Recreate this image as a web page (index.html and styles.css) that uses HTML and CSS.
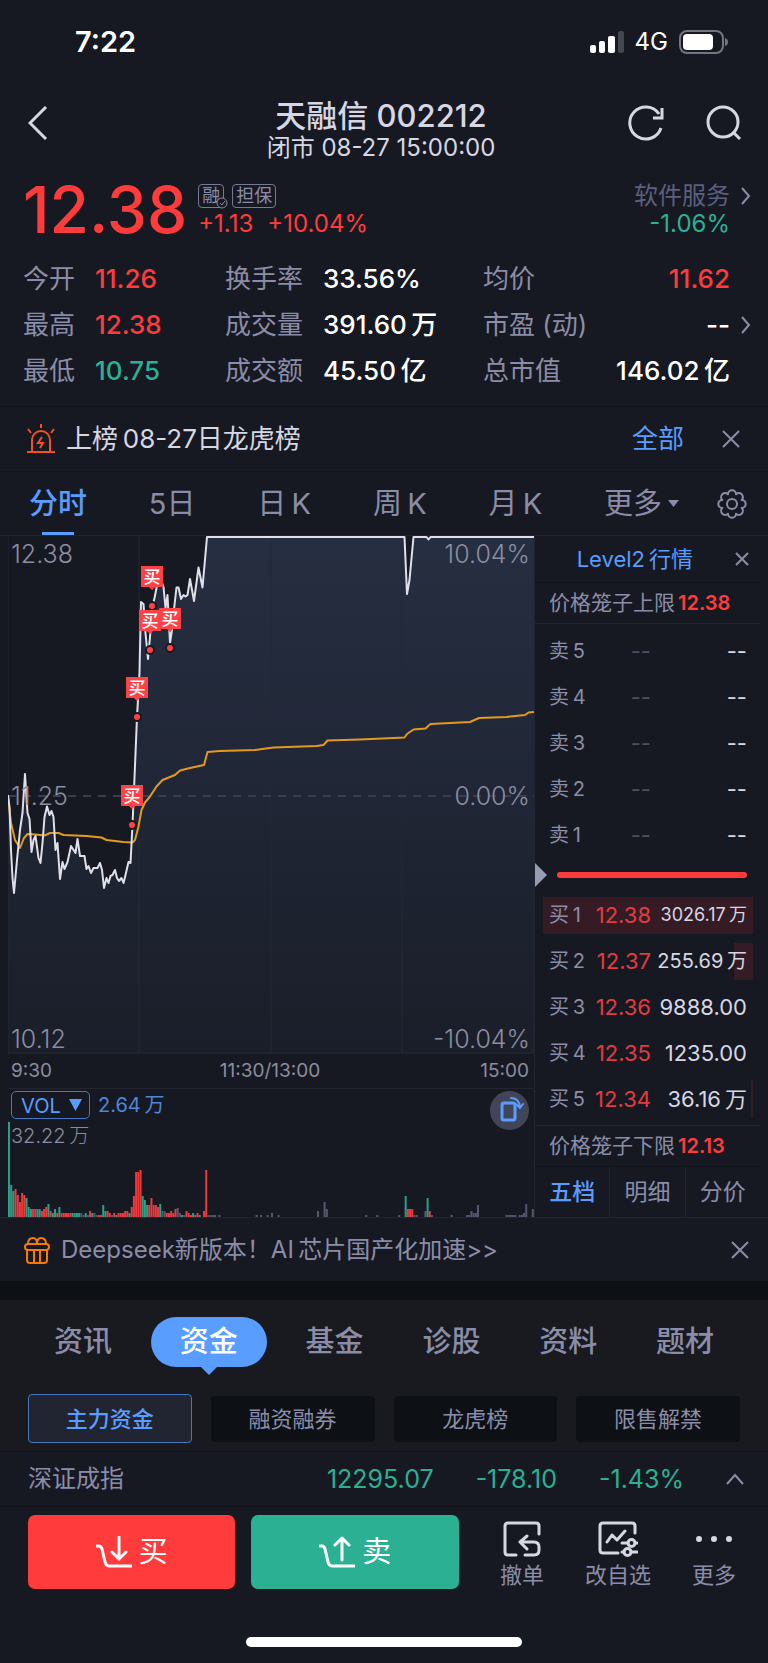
FILE: index.html
```html
<!DOCTYPE html>
<html lang="zh-CN">
<head>
    <meta charset="UTF-8">
    <meta name="viewport" content="width=device-width, initial-scale=1">
    <title>天融信 002212</title>
    <link rel="stylesheet" href="styles.css">
</head>
<body>
    <div class="status-bar">
        <span class="clock">7:22</span>
        <div class="status-icons">
            <svg width="34" height="22" viewBox="0 0 34 22" fill="#fff">
                <rect x="0" y="14" width="6" height="8" rx="2"/>
                <rect x="9" y="10" width="6" height="12" rx="2"/>
                <rect x="18" y="5" width="7" height="17" rx="2"/>
                <rect x="28" y="0" width="6" height="22" rx="2" fill="#45474f"/>
            </svg>
            <span>4G</span>
            <svg width="49" height="24" viewBox="0 0 49 24">
                <rect x="1" y="1" width="43" height="22" rx="7" fill="none" stroke="#74767d" stroke-width="2"/>
                <rect x="4" y="4" width="30" height="16" rx="4" fill="#fff"/>
                <path d="M46 8q3 1 3 4t-3 4z" fill="#74767d"/>
            </svg>
        </div>
    </div>

    <header class="header">
        <button class="icon-btn" aria-label="返回">
            <svg width="20" height="34" viewBox="0 0 20 34"><path d="M18 1L2 17l16 16"/></svg>
        </button>
        <div class="title">
            <h1>天融信 002212</h1>
            <p>闭市 08-27 15:00:00</p>
        </div>
        <div class="header-actions">
            <button class="icon-btn" aria-label="刷新">
                <svg width="36" height="36" viewBox="0 0 36 36"><path d="M33 23A16 16 0 1 1 31 9M34 3v10h-9"/></svg>
            </button>
            <button class="icon-btn" aria-label="搜索">
                <svg width="36" height="36" viewBox="0 0 36 36"><circle cx="17" cy="17" r="15"/><path d="M28 28l6 6"/></svg>
            </button>
        </div>
    </header>

    <section class="quote">
        <div class="quote-top">
            <strong class="price">12.38</strong>
            <div class="change">
                <div class="badges">
                    <span class="badge">融<svg class="badge-check" width="12" height="12" viewBox="0 0 12 12"><circle cx="6" cy="6" r="5"/><path d="M4 6l2 2 3-4"/></svg></span>
                    <span class="badge">担保</span>
                </div>
                <p class="up"><span>+1.13</span><span>+10.04%</span></p>
            </div>
            <a class="sector" href="#">
                <span class="sector-name">软件服务</span>
                <span class="down">-1.06%</span>
                <svg class="more-arrow" width="10" height="18" viewBox="0 0 10 18"><path d="M1 1l7 8-7 8"/></svg>
            </a>
        </div>
        <dl class="stats">
            <div><dt>今开</dt><dd class="up">11.26</dd></div>
            <div><dt>换手率</dt><dd>33.56%</dd></div>
            <div><dt>均价</dt><dd class="up">11.62</dd></div>
            <div><dt>最高</dt><dd class="up">12.38</dd></div>
            <div><dt>成交量</dt><dd>391.60&thinsp;万</dd></div>
            <div><dt>市盈 (动)</dt><dd>--</dd><svg class="more-arrow" width="10" height="18" viewBox="0 0 10 18"><path d="M1 1l7 8-7 8"/></svg></div>
            <div><dt>最低</dt><dd class="down">10.75</dd></div>
            <div><dt>成交额</dt><dd>45.50&thinsp;亿</dd></div>
            <div><dt>总市值</dt><dd>146.02&thinsp;亿</dd></div>
        </dl>
    </section>

    <div class="notice">
        <svg width="28" height="30" viewBox="0 0 28 30" fill="none" stroke="#f4511e" stroke-width="2">
            <path d="M5 27V16a9 9 0 0 1 18 0v11M14 0v4M1 5l3 4M27 5l-3 4M0 28h28"/>
            <path d="M15 13l-4 6h5l-3 5"/>
        </svg>
        <span class="notice-text">上榜&thinsp;08-27日龙虎榜</span>
        <a href="#">全部</a>
        <button class="close" aria-label="关闭"><svg width="18" height="18" viewBox="0 0 18 18"><path d="M1 1l16 16M17 1L1 17"/></svg></button>
    </div>

    <nav class="periods">
        <button class="active">分时</button>
        <button>5日</button>
        <button>日&thinsp;K</button>
        <button>周&thinsp;K</button>
        <button>月&thinsp;K</button>
        <button class="more">更多<svg width="11" height="7" viewBox="0 0 11 7"><path d="M0 0h11L5.500 7z" fill="#8b8da8"/></svg></button>
        <button class="settings" aria-label="设置">
            <svg width="30" height="30" viewBox="0 0 30 30" fill="none" stroke="#8b8da8" stroke-width="2" stroke-linejoin="round">
                <path d="M24.700 11A4 4 0 0 1 24.700 19A4 4 0 0 1 19 24.700A4 4 0 0 1 11 24.700A4 4 0 0 1 5.300 19A4 4 0 0 1 5.300 11A4 4 0 0 1 11 5.300A4 4 0 0 1 19 5.300A4 4 0 0 1 24.700 11z"/>
                <circle cx="15" cy="15" r="5"/>
            </svg>
        </button>
    </nav>

    <main class="market">
        <div class="chart">
            <div class="plot">
                <svg viewBox="0 0 526 518">
                    <defs>
                        <linearGradient id="area" x1="0" y1="0" x2="0" y2="1">
                            <stop offset="0" stop-color="#262e41"/>
                            <stop offset="1" stop-color="#1a1e29"/>
                        </linearGradient>
                    </defs>
                    <path fill="url(#area)" d="M0 518V259L1 271 3 314 4 342 6 357 9 324 12 294 14 277 17 238 19 277 21 283 23 316 25 304 27 300 30 322 32 327 34 307 36 281 39 270 41 279 43 275 45 281 47 314 49 307 52 343 54 326 56 333 59 326 63 310 67 317 69 303 72 320 76 320 78 333 80 330 83 337 85 332 89 332 92 327 94 334 96 352 98 342 100 347 102 340 104 339 107 334 109 342 111 345 113 342 115 347 117 339 120 326 122 327 124 289 126 242 129 181 131 137 133 66 135 68 137 97 140 123 142 101 144 70 146 62 149 47 152 41 155 51 157 72 159 59 162 107 164 94 166 69 168 51 170 51 173 63 175 59 177 60 179 59 182 43 186 65 190 31 194 51 199 1H396L399 58 401 44 405 1H526V518z"/>
                    <path class="grid-line" d="M0 0V518M131 0V518M263 0V518M394 0V518M526 0V518M0 517H526"/>
                    <path class="zero-line" d="M0 260H526"/>
                    <polyline class="avg-line" points="0,261 3,287 7,304 12,312 16,302 19.500,298 27.500,298.500 36.500,299.500 42,297 50.500,297 55.500,299 78.500,300 93.500,301.500 98.500,304 115.500,306 124.500,306.500 127,304 130.500,290.500 133.500,274 137,266.500 142,260.500 148.500,250.500 154.500,244 167,239 172,234.500 182,232 196,229 199.500,216 212,215 247,214 265.500,211.500 308.500,210 315.500,209 319.500,204.500 352,203.500 396.500,201.500 399,198 405.500,193.500 417.500,192.500 422.500,188 462,186 471,182 498.500,181 517,179 520.500,176.500 526,176"/>
                    <polyline class="price-line" points="0,259 1.500,271 3,314 4.500,342 6,357 9,324 12,294 14.500,277 17,238 19.500,277 21.500,283 23.500,316 25.500,304 27.500,300 30.500,322 32.500,327 34.500,307 36.500,281 39,270.500 41.500,279 43.500,275 45.500,281 47.500,314 49.500,307 52,343 54.500,326 56.500,333 59.500,326 63,310 67.500,317 69.500,303 72,320 76.500,320 78.500,333 80.500,330 83,337 85.500,332 89.500,332 92,327 94,334 96,352 98.500,342 100.500,347 102.500,340 104.500,339 107,334 109,342 111,345 113.500,342 115.500,347 117.500,339 120.500,326 122.500,327 124.500,289 126.500,242 129,181 131.500,137 133,66 135.500,68 137.500,97 140,123 142,101 144.500,70 146.500,62 149.500,47 152,41 155.500,51 157.500,72 159.500,59 162,107 164,94 166.500,69 168.500,51.500 170.500,51.500 173,63 175.500,59 177.500,60.500 179.500,59 182,43 186,65 190.500,31.500 194.500,51.500 199,1 396.500,1 399,58 401.500,44 405.500,1 418.500,1 420.500,3.500 422.500,1 526,1"/>
                    <g id="trades"></g>
                </svg>
                <span class="scale top-left">12.38</span>
                <span class="scale top-right">10.04%</span>
                <span class="scale mid-left">11.25</span>
                <span class="scale mid-right">0.00%</span>
                <span class="scale bottom-left">10.12</span>
                <span class="scale bottom-right">-10.04%</span>
            </div>
            <div class="times"><span>9:30</span><span>11:30/13:00</span><span>15:00</span></div>
            <div class="volume">
                <div class="volume-head">
                    <div class="indicator">
                        <select aria-label="指标"><option>VOL</option></select>
                        <svg width="13" height="12" viewBox="0 0 13 12"><path d="M0 0h13L6.500 12z" fill="#589dff"/></svg>
                    </div>
                    <span>2.64&thinsp;万</span>
                </div>
                <span class="volume-max">32.22&thinsp;万</span>
                <svg class="bars" id="bars" viewBox="0 0 526 96"></svg>
                <button class="rotate" aria-label="横屏">
                    <svg width="24" height="26" viewBox="0 0 24 26" fill="none" stroke="#589dff" stroke-width="3" stroke-linejoin="round" stroke-linecap="round">
                        <rect x="2" y="7" width="13" height="17" rx="2"/>
                        <path d="M11 2q8 0 9 9M16 8l4 4 3-4" stroke-width="2"/>
                    </svg>
                </button>
            </div>
        </div>

        <aside class="book">
            <div class="level2">
                <a href="#">Level2&thinsp;行情</a>
                <button class="close" aria-label="关闭"><svg width="14" height="14" viewBox="0 0 14 14"><path d="M1 1l12 12M13 1L1 13"/></svg></button>
            </div>
            <p class="limit">价格笼子上限<b>12.38</b></p>
            <table class="asks">
                <tr><th>卖&thinsp;5</th><td>--</td><td>--</td></tr>
                <tr><th>卖&thinsp;4</th><td>--</td><td>--</td></tr>
                <tr><th>卖&thinsp;3</th><td>--</td><td>--</td></tr>
                <tr><th>卖&thinsp;2</th><td>--</td><td>--</td></tr>
                <tr><th>卖&thinsp;1</th><td>--</td><td>--</td></tr>
            </table>
            <div class="ratio">
                <svg width="12" height="24" viewBox="0 0 12 24"><path d="M0 0l12 12L0 24z" fill="#979cb0"/></svg>
                <span></span>
            </div>
            <table class="bids">
                <tr style="--depth: 100%"><th>买&thinsp;1</th><td>12.38</td><td class="small">3026.17&thinsp;万</td></tr>
                <tr style="--depth: 9%"><th>买&thinsp;2</th><td>12.37</td><td class="medium">255.69&thinsp;万</td></tr>
                <tr><th>买&thinsp;3</th><td>12.36</td><td>9888.00</td></tr>
                <tr><th>买&thinsp;4</th><td>12.35</td><td>1235.00</td></tr>
                <tr style="--depth: 1%"><th>买&thinsp;5</th><td>12.34</td><td>36.16&thinsp;万</td></tr>
            </table>
            <p class="limit lower">价格笼子下限<b>12.13</b></p>
            <div class="book-tabs">
                <button class="active">五档</button>
                <button>明细</button>
                <button>分价</button>
            </div>
        </aside>
    </main>

    <div class="promo">
        <svg width="26" height="28" viewBox="0 0 26 28" fill="none" stroke="#f57c00" stroke-width="2">
            <rect x="1" y="8" width="24" height="6" rx="3"/>
            <path d="M3 14v10q0 3 3 3h14q3 0 3-3V14M10 14v13M16 14v13M4 8q0-6 5-6 4 0 4 6M22 8q0-6-5-6-4 0-4 6"/>
        </svg>
        <a href="#">Deepseek新版本！AI&thinsp;芯片国产化加速&gt;&gt;</a>
        <button class="close" aria-label="关闭"><svg width="18" height="18" viewBox="0 0 18 18"><path d="M1 1l16 16M17 1L1 17"/></svg></button>
    </div>

    <section class="info">
        <nav class="info-tabs">
            <button>资讯</button>
            <button class="active">资金</button>
            <button>基金</button>
            <button>诊股</button>
            <button>资料</button>
            <button>题材</button>
        </nav>
        <div class="info-filters">
            <button class="active">主力资金</button>
            <button>融资融券</button>
            <button>龙虎榜</button>
            <button>限售解禁</button>
        </div>
    </section>

    <div class="index-row">
        <span class="index-name">深证成指</span>
        <span>12295.07</span>
        <span>-178.10</span>
        <span>-1.43%</span>
        <button class="close" aria-label="展开"><svg width="18" height="12" viewBox="0 0 18 12"><path d="M1 11l8-9 8 9"/></svg></button>
    </div>

    <footer class="actions">
        <button class="trade buy">
            <svg width="36" height="32" viewBox="0 0 36 32"><path d="M1 10h2q2 0 3 3l3 13q1 4 4 4h22M23 1v22M16 16l7 7 7-7"/></svg>买
        </button>
        <button class="trade sell">
            <svg width="36" height="32" viewBox="0 0 36 32"><path d="M1 10h2q2 0 3 3l3 13q1 4 4 4h22M23 24V2M16 9l7-7 7 7"/></svg>卖
        </button>
        <button class="tool">
            <svg width="38" height="36" viewBox="0 0 38 36"><path d="M36 13V5q0-3-3-3H5Q2 2 2 5v26q0 3 3 3h8M22 34h9q5 0 5-5v-3q0-5-5-5H17M24 15l-7 6 7 7"/></svg>
            撤单
        </button>
        <button class="tool">
            <svg width="40" height="36" viewBox="0 0 40 36"><path d="M37 12V5q0-3-3-3H5Q2 2 2 5v24q0 3 3 3h15M9 21l5-7 5 5 8-9M24 22h6M37 22h2M24 31h2M33 31h6"/><circle cx="33.500" cy="22" r="3.500"/><circle cx="29.500" cy="31" r="3.500"/></svg>
            改自选
        </button>
        <button class="tool">
            <svg width="36" height="36" viewBox="0 0 36 36"><path d="M3 18h0M18 18h0M33 18h0" class="dots"/></svg>
            更多
        </button>
    </footer>
    <div class="home-indicator"></div>

    <script src="chart.js"></script>
</body>
</html>
```
FILE: styles.css
```css
* {
    box-sizing: border-box;
}
body {
    margin: 0;
    background-color: #171922;
    color: #d6d7e2;
    font-family: Inter, "Noto Sans CJK SC", sans-serif;
    font-size: 24px;
    line-height: 28px;
}
h1, p, dl, dd {
    margin: 0;
}
a {
    color: #589dff;
    text-decoration: none;
}
button, select {
    padding: 0;
    border: 0;
    background: none;
    color: #8b8da8;
    font: inherit;
    white-space: nowrap;
}
svg {
    display: block;
    flex-shrink: 0;
}
.up {
    color: #ff3b3b;
}
.down {
    color: #2bb094;
}

/* 状态栏 */
.status-bar {
    display: flex;
    justify-content: space-between;
    align-items: center;
    height: 82px;
    padding: 2px 40px 0 75px;
    color: #fff;
}
.clock {
    font-size: 29px;
    font-weight: 600;
}
.status-icons {
    display: flex;
    align-items: center;
    gap: 11px;
}

/* 标题 */
.header {
    display: grid;
    grid-template-columns: 1fr auto 1fr;
    align-items: center;
    padding: 0 26px 0 28px;
}
.title {
    padding: 17px 8px 0 0;
    text-align: center;
}
.title h1 {
    font-size: 31px;
    font-weight: 500;
    line-height: 34px;
}
.title p {
    font-size: 24px;
    line-height: 30px;
}
.header-actions {
    display: flex;
    justify-content: flex-end;
    gap: 42px;
}
.icon-btn svg {
    fill: none;
    stroke: #d6d7e2;
    stroke-width: 3;
}

/* 报价 */
.quote {
    padding: 19px 38px 12px 23px;
    border-bottom: 1px solid #11131a;
}
.quote-top {
    display: flex;
}
.price {
    color: #ff3b3b;
    font-size: 64px;
    font-weight: 500;
    line-height: 56px;
}
.change {
    flex: 1;
    margin-left: 11px;
}
.change p {
    display: flex;
    gap: 14px;
}
.badges {
    display: flex;
    align-items: center;
    gap: 8px;
    height: 28px;
}
.badge {
    position: relative;
    padding: 0 3px;
    border: 1px solid #777994;
    border-radius: 4px;
    color: #8b8da8;
    font-size: 18px;
    line-height: 22px;
}
.badge-check {
    position: absolute;
    right: -5px;
    bottom: -2px;
    fill: #171922;
    stroke: #8b8da8;
}
.sector {
    position: relative;
    display: flex;
    flex-direction: column;
    align-items: flex-end;
}
.sector-name {
    color: #5d5f7d;
}
.more-arrow {
    position: absolute;
    right: -21px;
    fill: none;
    stroke: #8b8da8;
    stroke-width: 2;
}
.sector .more-arrow {
    top: 5px;
}
.stats {
    display: grid;
    grid-template-columns: 202px 258px 1fr;
    padding-top: 18px;
    font-size: 26px;
    line-height: 46px;
}
.stats div {
    position: relative;
    display: flex;
    align-items: center;
}
.stats dt {
    width: 72px;
    color: #8b8da8;
}
.stats div:nth-child(3n+2) dt {
    width: 98px;
}
.stats div:nth-child(3n) dt {
    flex: 1;
}
.stats dd {
    font-weight: 500;
}
.stats dd:not([class]) {
    color: #fff;
}

/* 龙虎榜提示 */
.notice {
    display: flex;
    align-items: center;
    height: 65px;
    padding: 0 28px 0 27px;
    border-bottom: 1px solid #11131a;
    font-size: 26px;
}
.notice-text {
    flex: 1;
    margin-left: 11px;
}
.close svg {
    fill: none;
    stroke: #8b8da8;
    stroke-width: 2;
}
.notice .close {
    margin-left: 38px;
}

/* 周期切换 */
.periods {
    display: flex;
    justify-content: space-between;
    align-items: stretch;
    height: 64px;
    padding: 0 21px 0 29px;
    border-bottom: 1px solid #22242f;
    font-size: 29px;
}
.periods .active {
    position: relative;
    color: #589dff;
    font-weight: 500;
}
.periods .active::after {
    content: "";
    position: absolute;
    bottom: 0;
    left: 50%;
    width: 32px;
    height: 3px;
    margin-left: -16px;
    background-color: #589dff;
}
.periods .more {
    display: flex;
    align-items: center;
    gap: 6px;
}
.periods .settings {
    display: flex;
    align-items: center;
    margin-left: -24px;
}

/* 行情主体 */
.market {
    display: flex;
    padding: 0 8px;
    border-bottom: 1px solid #22242f;
}
.chart {
    flex: 1;
    min-width: 0;
}
.plot {
    position: relative;
}
.plot > svg {
    width: 100%;
}
.grid-line {
    fill: none;
    stroke: #242834;
}
.zero-line {
    stroke: #3a3d4d;
    stroke-width: 2;
    stroke-dasharray: 8 7;
}
.avg-line, .price-line {
    fill: none;
    stroke: #e39a20;
    stroke-width: 2;
    stroke-linejoin: round;
}
.price-line {
    stroke: #dfe0ea;
}
.trade-tag {
    fill: #ff4246;
}
.trade-dot {
    fill: #ff4246;
    stroke: #171922;
    stroke-width: 2;
}
.trade-text {
    fill: #fff;
    font-size: 17px;
    font-weight: 500;
    text-anchor: middle;
}
.scale {
    position: absolute;
    color: #8b8da0;
    font-weight: 300;
    font-size: 25px;
}
.top-left, .mid-left, .bottom-left {
    left: 3px;
}
.top-right, .mid-right, .bottom-right {
    right: 4px;
}
.top-left, .top-right {
    top: 4px;
}
.mid-left, .mid-right {
    top: 50%;
    margin-top: -13px;
}
.bottom-left, .bottom-right {
    bottom: 1px;
}
.times {
    display: grid;
    grid-template-columns: 1fr auto 1fr;
    padding: 0 5px 0 3px;
    color: #8b8da0;
    font-size: 19px;
    line-height: 34px;
}
.times span:last-child {
    text-align: right;
}
.volume {
    position: relative;
    height: 129px;
    border-top: 1px solid #22242f;
    padding: 2px 0 0 3px;
    font-size: 20px;
}
.volume-head {
    display: flex;
    align-items: center;
    gap: 8px;
    color: #4c87d9;
}
.indicator {
    position: relative;
}
.indicator select {
    appearance: none;
    display: block;
    width: 79px;
    height: 28px;
    padding-left: 9px;
    border: 1px solid #4377c2;
    border-radius: 5px;
    color: #589dff;
}
.indicator svg {
    position: absolute;
    top: 8px;
    right: 8px;
}
.volume-max {
    display: block;
    margin-top: 3px;
    color: #8b8da0;
    font-weight: 300;
}
.bars {
    position: absolute;
    left: 0;
    bottom: 0;
    width: 100%;
}
.bar-r {
    fill: #ec3a3d;
}
.bar-g {
    fill: #27a188;
}
.bar-n {
    fill: #55586d;
}
.rotate {
    position: absolute;
    top: 2px;
    right: 5px;
    display: flex;
    align-items: center;
    justify-content: center;
    width: 39px;
    height: 39px;
    padding: 0 0 3px 4px;
    border-radius: 50%;
    background-color: #424558;
}

/* 五档盘口 */
.book {
    display: flex;
    flex-direction: column;
    width: 226px;
    border-left: 1px solid #22242f;
}
.level2 {
    display: flex;
    justify-content: flex-end;
    align-items: center;
    gap: 42px;
    height: 47px;
    padding-right: 11px;
    border-bottom: 1px solid #11131a;
    font-size: 22px;
}
.limit {
    padding-left: 14px;
    border-bottom: 1px solid #22242f;
    color: #8b8da8;
    font-size: 21px;
    line-height: 40px;
}
.limit b {
    margin-left: 3px;
    color: #ff3b3b;
    font-weight: 600;
    font-size: 20px;
}
.lower {
    margin-top: 3px;
    border-top: 1px solid #22242f;
    border-bottom-color: #11131a;
}
.book table {
    width: 210px;
    margin-left: 8px;
    border-collapse: collapse;
    table-layout: fixed;
    font-size: 22px;
}
.book tr {
    height: 46px;
}
.bids tr {
    background: linear-gradient(#351c24, #351c24) right center / var(--depth, 0) 37px no-repeat;
}
.book th {
    width: 44px;
    padding: 0 0 0 6px;
    color: #8b8da8;
    font-weight: 400;
    font-size: 20px;
    text-align: left;
    white-space: nowrap;
}
.book td {
    width: 64px;
    padding: 0;
    color: #e23c3e;
    text-align: right;
    white-space: nowrap;
}
.book td:last-child {
    width: auto;
    padding-right: 6px;
    color: #d6d7e2;
}
.book td.small {
    font-size: 18px;
}
.book td.medium {
    font-size: 20px;
}
.book .asks {
    margin-top: 4px;
}
.asks td:nth-child(2) {
    color: #4c4e64;
}
.ratio {
    display: flex;
    align-items: center;
    height: 34px;
}
.ratio span {
    flex: 1;
    height: 6px;
    margin: 0 13px 0 10px;
    border-radius: 3px;
    background-color: #ff3b3b;
}
.book-tabs {
    display: flex;
    flex: 1;
    font-size: 23px;
}
.book-tabs button {
    flex: 1;
}
.book-tabs button + button {
    border-left: 1px solid #22242f;
}
.book-tabs .active {
    color: #589dff;
    font-weight: 500;
}

/* 推广 */
.promo {
    display: flex;
    align-items: center;
    height: 63px;
    padding: 0 19px 0 24px;
}
.promo a {
    flex: 1;
    margin-left: 11px;
    color: #8b8da8;
}

/* 资讯区 */
.info {
    padding: 17px 28px 8px;
    border-top: 19px solid #0d1015;
    background-color: #181a20;
}
.info-tabs {
    display: flex;
    justify-content: space-between;
    padding: 0 16px;
    font-size: 29px;
}
.info-tabs button {
    height: 50px;
    padding: 0 10px;
    font-weight: 500;
}
.info-tabs .active {
    position: relative;
    margin: 0 -10px;
    padding: 0 29px;
    border-radius: 25px;
    background-color: #589dff;
    color: #fff;
}
.info-tabs .active::after {
    content: "";
    position: absolute;
    top: 100%;
    left: 50%;
    margin-left: -8px;
    border: 8px solid transparent;
    border-top-color: #589dff;
    border-bottom: 0;
}
.info-filters {
    display: grid;
    grid-template-columns: repeat(4, 1fr);
    align-items: center;
    gap: 19px;
    margin-top: 27px;
    font-size: 22px;
}
.info-filters button {
    height: 46px;
    border-radius: 4px;
    background-color: #0d1015;
}
.info-filters .active {
    height: 49px;
    border: 1px solid #4377c2;
    background-color: #212532;
    color: #589dff;
    font-weight: 500;
}

/* 指数 */
.index-row {
    display: flex;
    align-items: center;
    gap: 42px;
    height: 56px;
    padding: 0 24px 0 28px;
    border-top: 1px solid #11131a;
    border-bottom: 1px solid #11131a;
    color: #2bb094;
    font-size: 25px;
}
.index-name {
    flex: 1;
    color: #8b8da8;
    font-size: 24px;
}

/* 底部操作 */
.actions {
    display: flex;
    align-items: flex-start;
    padding: 8px 32px 0 28px;
}
.trade {
    display: flex;
    flex: 1;
    align-items: center;
    justify-content: center;
    gap: 7px;
    height: 74px;
    border-radius: 7px;
    color: #fff;
    font-size: 29px;
}
.trade svg, .tool svg {
    fill: none;
    stroke: #fff;
    stroke-width: 3;
    stroke-linecap: round;
    stroke-linejoin: round;
}
.buy {
    margin-right: 16px;
    background-color: #ff3b3b;
}
.sell {
    background-color: #2bb094;
}
.tool {
    display: flex;
    flex-direction: column;
    align-items: center;
    gap: 4px;
    margin-left: 41px;
    padding-top: 6px;
    font-size: 22px;
}
.tool svg {
    stroke: #d6d7e2;
}
.tool .dots {
    stroke-width: 6;
}
.home-indicator {
    width: 36%;
    height: 10px;
    margin: 48px auto 16px;
    border-radius: 5px;
    background-color: #fff;
}
```
FILE: chart.js
```js
const NS = 'http://www.w3.org/2000/svg';

function add(parent, name, attrs, text) {
    const el = document.createElementNS(NS, name);
    for (const key in attrs) el.setAttribute(key, attrs[key]);
    if (text) el.textContent = text;
    parent.appendChild(el);
}

// 成交量：[起始分钟, 颜色+高度...]，r 涨 g 跌 n 平
const volumes = [
    [0, 'g95 g32 g26 r28 r22 r15 r24 r22 g19 g10 g8 r8 r8 g8 g8 r6 r8 r10 g13 r6 g4 g8 r4 g10 r4 r4 r4 r4 r4 g4'],
    [30, 'g4 g4 g4 n4 n2 g4 n2 r6 g4 n4 n2 r2 r2 g12 g6 r6 r4 n2 r4 g2 r4 r4 r4 r6 r6 g4 r10 r21 r45 r45 r47'],
    [61, 'g21 g17 g12 r12 r19 r12 r12 r10 g13 n6 n6 r4 r4 r6 r4 r8 n9 n4 g2 n2 r6 r4 r2 g4 r2 r4 g2'],
    [89, 'r6 r47 n2 n2 n2 n2'], [96, 'n2'], [113, 'n2'], [115, 'n2'], [118, 'n2'], [120, 'n4'], [123, 'n2'],
    [141, 'n6'], [144, 'n15 n8'], [163, 'n2'], [168, 'n2'], [178, 'n2'],
    [181, 'g21 r8 r8 r8 n2 n2'], [190, 'n6 g19 r6 n2'], [202, 'n2'],
    [209, 'n2 n2 n6 n4 n4 n12'], [227, 'n2 n2 n2 n2 n2'], [233, 'n2 n2 n4 n13'], [239, 'n8']
];
const bars = document.getElementById('bars');
const step = 526 / 240;
for (const [start, list] of volumes) {
    list.split(' ').forEach((item, i) => {
        const h = Number(item.slice(1));
        add(bars, 'rect', { class: 'bar-' + item[0], x: (start + i) * step, y: 96 - h, width: 2, height: h });
    });
}

// 买入标记：x, 成交点 y
const trades = [[144, 70], [142, 114], [162, 112], [129, 181], [124, 289]];
const layer = document.getElementById('trades');
for (const [x, y] of trades) {
    add(layer, 'path', { class: 'trade-tag', d: `M${x - 11} ${y - 40}h22v21h-8l-3 3-3-3h-8z` });
    add(layer, 'text', { class: 'trade-text', x, y: y - 23 }, '买');
    add(layer, 'circle', { class: 'trade-dot', cx: x, cy: y, r: 4 });
}
```
